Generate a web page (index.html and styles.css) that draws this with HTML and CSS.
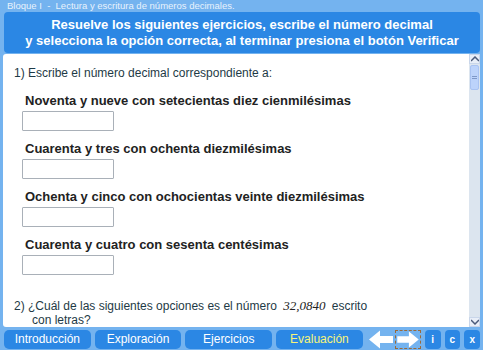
FILE: index.html
```
<!DOCTYPE html>
<html lang="es">
<head>
<meta charset="utf-8">
<link rel="stylesheet" href="styles.css">
</head>
<body>
<div class="app">
  <div class="crumb">Bloque I &nbsp;-&nbsp; Lectura y escritura de números decimales.</div>
  <div class="header">Resuelve los siguientes ejercicios, escribe el número decimal<br>y selecciona la opción correcta, al terminar presiona el botón Verificar</div>
  <div class="main">
    <div class="content">
      <p class="q">1) Escribe el número decimal correspondiente a:</p>
      <div class="item"><div class="label">Noventa y nueve con setecientas diez cienmilésimas</div><div class="input"></div></div>
      <div class="item"><div class="label">Cuarenta y tres con ochenta diezmilésimas</div><div class="input"></div></div>
      <div class="item"><div class="label">Ochenta y cinco con ochocientas veinte diezmilésimas</div><div class="input"></div></div>
      <div class="item"><div class="label">Cuarenta y cuatro con sesenta centésimas</div><div class="input"></div></div>
      <p class="q2">2) ¿Cuál de las siguientes opciones es el número <span class="num">32,0840</span> escrito<br><span class="ind">con letras?</span></p>
    </div>
    <div class="scroll">
      <div class="sbtn"><svg width="8" height="6" viewBox="0 0 8 6"><path d="M0 5 L4 1 L8 5" fill="none" stroke="#4a5a7a" stroke-width="1.5"/></svg></div>
      <div class="thumb"><span></span></div>
      <div class="track"></div>
      <div class="sbtn"><svg width="8" height="6" viewBox="0 0 8 6"><path d="M0 1 L4 5 L8 1" fill="none" stroke="#4a5a7a" stroke-width="1.5"/></svg></div>
    </div>
  </div>
  <div class="nav">
    <div class="tab">Introducción</div>
    <div class="tab">Exploración</div>
    <div class="tab">Ejercicios</div>
    <div class="tab active">Evaluación</div>
    <div class="arrows">
      <svg class="arr" width="26" height="19" viewBox="0 0 26 19"><path d="M1 9.5 L12 0.5 L12 6 L25 6 L25 13 L12 13 L12 18.5 Z" fill="#fff"/></svg>
      <div class="arrbox"><svg width="26" height="19" viewBox="0 0 26 19"><path d="M25 9.5 L14 0.5 L14 6 L1 6 L1 13 L14 13 L14 18.5 Z" fill="#fff"/></svg></div>
    </div>
    <div class="sq">i</div>
    <div class="sq">c</div>
    <div class="sq">x</div>
  </div>
</div>
</body>
</html>
```
FILE: styles.css
```
* { box-sizing: border-box; }
html, body { margin: 0; padding: 0; }
body { width: 483px; height: 350px; overflow: hidden; background: #74b3ef; font-family: "Liberation Sans", Arial, sans-serif; }
.app { display: flex; flex-direction: column; height: 350px; padding: 0 3px 0 3px; }
.crumb { height: 11px; font-size: 9.5px; line-height: 11px; color: #e8f2fc; padding-left: 4px; }
.header { margin: 1px 0 0 1px; height: 41px; background: #2b87e4; border-radius: 4px; color: #fff; font-weight: bold; font-size: 13px; line-height: 16px; text-align: center; padding-top: 5px; }
.main { margin-top: 1px; display: flex; height: 273px; }
.content { flex: 1; background: #fff; border-radius: 3px 0 0 3px; padding: 12px 0 0 11px; color: #1e3a46; overflow: hidden; }
.q { margin: 0; font-size: 12px; line-height: 14px; }
.item { padding-left: 11px; }
.label { font-weight: bold; font-size: 13px; color: #222; margin-top: 10px; line-height: 16px; }
.item:first-of-type .label { margin-top: 13px; }
.input { margin-top: 2px; margin-left: -3px; width: 92px; height: 20px; border: 1px solid #a9b0b8; border-radius: 1px; background: #fff; }
.q2 { margin: 24px 0 0 0; font-size: 12px; line-height: 14px; color: #1e3a46; }
.num { font-family: "Liberation Serif", serif; font-style: italic; font-size: 13px; color: #222; margin: 0 3px; }
.ind { padding-left: 18px; }
.scroll { width: 11px; background: #dce5ef; display: flex; flex-direction: column; }
.sbtn { height: 10px; background: #e8eef8; border: 1px solid #c9d6ea; display: flex; align-items: center; justify-content: center; }
.thumb { height: 25px; margin: 1px 1px 0 1px; background: #bcd3fb; border: 1px solid #a9c3f2; border-radius: 2px; display: flex; align-items: center; justify-content: center; }
.thumb span { width: 5px; height: 3px; border-top: 1px solid #7e98c8; border-bottom: 1px solid #7e98c8; }
.track { flex: 1; }
.nav { display: flex; align-items: center; height: 21px; margin-top: 2px; gap: 4px; padding-left: 1px; }
.tab { width: 88px; height: 19px; background: #2b87e4; border-radius: 5px; color: #fff; font-size: 12px; text-align: center; line-height: 19px; }
.tab.active { color: #f6f47a; }
.arrows { display: flex; align-items: center; margin-left: 1px; gap: 1px; }
.arrbox { width: 26px; height: 19px; border: 1px dashed #9a6a3a; display: flex; align-items: center; justify-content: center; }
.arrbox svg { width: 24px; height: 17px; }
.sq { width: 16px; height: 19px; background: #2b87e4; border-radius: 4px; color: #fff; font-weight: bold; font-size: 10px; text-align: center; line-height: 19px; }
```
